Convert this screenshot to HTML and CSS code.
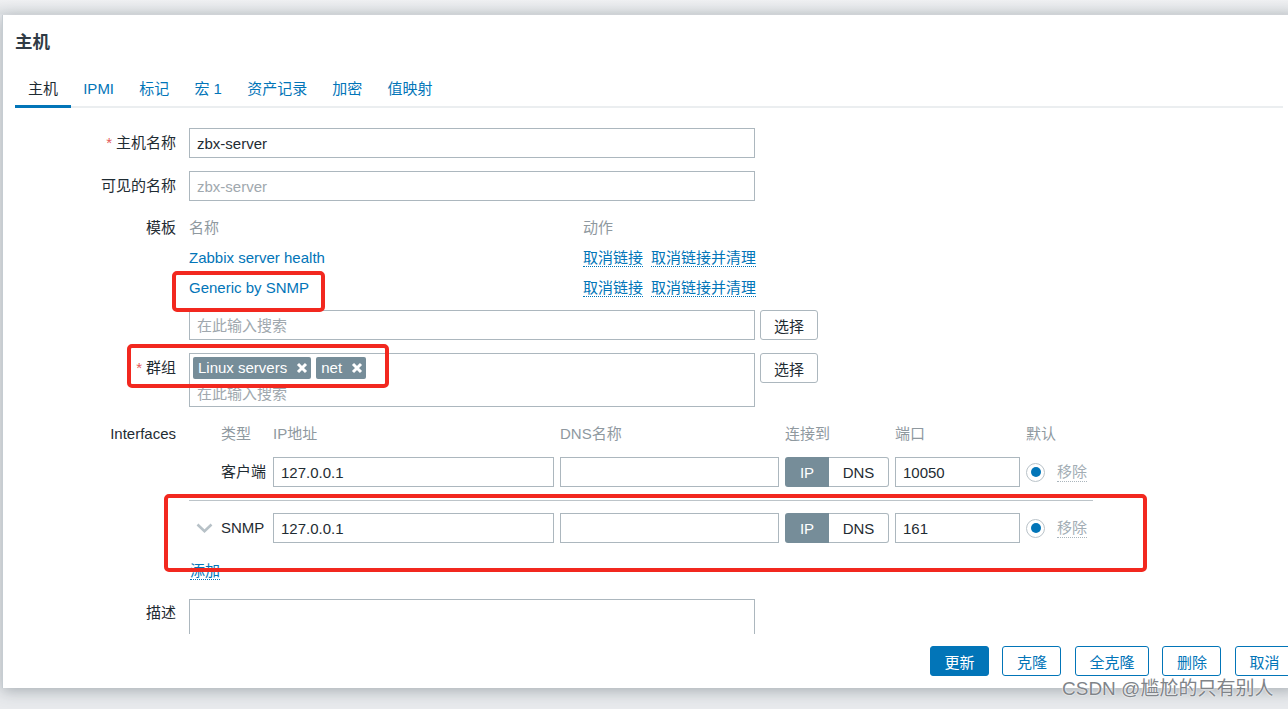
FILE: index.html
```html
<!DOCTYPE html>
<html lang="zh-CN">
<head>
<meta charset="utf-8">
<title>主机</title>
<link rel="stylesheet" href="styles.css">
</head>
<body>
<div class="dialog">
  <div class="dialog-head"><h4 class="dialog-title">主机</h4></div>
  <ul class="tabs">
    <li class="tab active">主机</li>
    <li class="tab">IPMI</li>
    <li class="tab">标记</li>
    <li class="tab">宏 1</li>
    <li class="tab">资产记录</li>
    <li class="tab">加密</li>
    <li class="tab">值映射</li>
  </ul>
  <div class="dialog-body">
    <form class="form-grid">
      <label class="lbl"><span class="req">*</span>主机名称</label>
      <div><input class="text-input" type="text" value="zbx-server"></div>

      <label class="lbl">可见的名称</label>
      <div><input class="text-input" type="text" placeholder="zbx-server"></div>

      <label class="lbl lbl-hdr">模板</label>
      <div>
        <div class="tpl-table">
          <div class="th">名称</div>
          <div class="th">动作</div>
          <div class="td"><a class="link">Zabbix server health</a></div>
          <div class="td actions"><a class="link dotted">取消链接</a><a class="link dotted">取消链接并清理</a></div>
          <div class="td"><a class="link">Generic by SNMP</a></div>
          <div class="td actions"><a class="link dotted">取消链接</a><a class="link dotted">取消链接并清理</a></div>
        </div>
        <div class="pick-row search-row">
          <input class="text-input" type="text" placeholder="在此输入搜索">
          <button type="button" class="btn-alt">选择</button>
        </div>
      </div>

      <label class="lbl"><span class="req">*</span>群组</label>
      <div class="pick-row">
        <div class="ms">
          <div class="ms-tags">
            <span class="tag">Linux servers<svg class="tag-x" width="12" height="12" viewBox="0 0 12 12"><path d="M2 2L10 10M10 2L2 10" stroke="#fff" stroke-width="3" fill="none"/></svg></span>
            <span class="tag">net<svg class="tag-x" width="12" height="12" viewBox="0 0 12 12"><path d="M2 2L10 10M10 2L2 10" stroke="#fff" stroke-width="3" fill="none"/></svg></span>
          </div>
          <input class="ms-input" type="text" placeholder="在此输入搜索">
        </div>
        <button type="button" class="btn-alt">选择</button>
      </div>

      <label class="lbl lbl-hdr">Interfaces</label>
      <div class="ifaces">
        <div class="if-grid if-head">
          <span></span>
          <span>类型</span>
          <span>IP地址</span>
          <span>DNS名称</span>
          <span>连接到</span>
          <span>端口</span>
          <span>默认</span>
        </div>
        <div class="if-grid if-row if-first">
          <span></span>
          <span class="if-type">客户端</span>
          <input class="text-input" type="text" value="127.0.0.1">
          <input class="text-input" type="text" value="">
          <div class="seg"><span class="seg-on">IP</span><span class="seg-off">DNS</span></div>
          <input class="text-input" type="text" value="10050">
          <div class="if-default"><span class="radio"></span><span class="remove">移除</span></div>
        </div>
        <div class="if-grid if-row if-second">
          <svg class="chev" width="17" height="10" viewBox="0 0 17 10"><path d="M1.5 1.5L8.5 8.2L15.5 1.5" stroke="#b7c1c7" stroke-width="2.6" fill="none"/></svg>
          <span class="if-type">SNMP</span>
          <input class="text-input" type="text" value="127.0.0.1">
          <input class="text-input" type="text" value="">
          <div class="seg"><span class="seg-on">IP</span><span class="seg-off">DNS</span></div>
          <input class="text-input" type="text" value="161">
          <div class="if-default"><span class="radio"></span><span class="remove">移除</span></div>
        </div>
        <div class="add-row"><a class="link dotted">添加</a></div>
      </div>

      <label class="lbl lbl-hdr">描述</label>
      <div><textarea class="textarea"></textarea></div>
    </form>
  </div>
  <div class="dialog-foot">
    <button type="button" class="btn primary">更新</button>
    <button type="button" class="btn">克隆</button>
    <button type="button" class="btn">全克隆</button>
    <button type="button" class="btn">删除</button>
    <button type="button" class="btn">取消</button>
  </div>
</div>

<div class="mark mark-tpl"></div>
<div class="mark mark-grp"></div>
<div class="mark mark-snmp"></div>
<div class="watermark">CSDN @尴尬的只有别人</div>
</body>
</html>
```
FILE: styles.css
```css
* {
  box-sizing: border-box;
  margin: 0;
  padding: 0;
}

html {
  background: #e8eaed;
}

body {
  position: relative;
  width: 1288px;
  height: 709px;
  overflow: hidden;
  padding: 15px 0 0 2px;
  background: linear-gradient(#eff0f2 0, #dfe2e5 14px, #e8eaed 15px);
  font-family: "Liberation Sans", "Noto Sans CJK SC", sans-serif;
  font-size: 15px;
  color: #1f2c33;
}

.dialog {
  display: flex;
  flex-direction: column;
  width: 1294px;
  height: 673px;
  background: #fff;
  border-left: 1px solid #c6cdd2;
  box-shadow: 0 3px 14px rgba(50, 62, 72, 0.35);
}

.dialog-head {
  padding: 17px 12px 20px;
}

.dialog-title {
  font-size: 17.5px;
  line-height: 20px;
  font-weight: bold;
  color: #2f3b45;
}

.tabs {
  display: flex;
  list-style: none;
  margin: 0 13px 0 12px;
  border-bottom: 2px solid #ebeef0;
}

.tab {
  padding: 8px 12.6px 7px;
  line-height: 18px;
  border-bottom: 3px solid transparent;
  margin-bottom: -2px;
  color: #0275b8;
}

.tab:first-child {
  padding-left: 13px;
}

.tab.active {
  color: #1f2c33;
  border-bottom-color: #0275b8;
}

.dialog-body {
  height: 526px;
  overflow: hidden;
  padding: 20px 0 0 12px;
}

.form-grid {
  display: grid;
  grid-template-columns: 161px 1fr;
  column-gap: 13px;
  row-gap: 13px;
  align-items: start;
}

.lbl {
  text-align: right;
  line-height: 30px;
  white-space: nowrap;
}

.lbl-hdr {
  line-height: 28px;
}

.req {
  color: #e45959;
  margin-right: 4px;
}

.text-input {
  display: block;
  width: 566px;
  height: 30px;
  border: 1px solid #acb7be;
  padding: 0 7px;
  font: inherit;
  color: #1f2c33;
  background: #fff;
  outline: none;
}

.text-input::placeholder,
.ms-input::placeholder {
  color: #a0a8ae;
}

.link {
  color: #0275b8;
  text-decoration: none;
}

.dotted {
  border-bottom: 1px dotted #0275b8;
}

.tpl-table {
  display: grid;
  grid-template-columns: 394px 172px;
  width: 566px;
}

.th {
  height: 29px;
  line-height: 28px;
  color: #8f999f;
}

.td {
  height: 30px;
  line-height: 30px;
  white-space: nowrap;
}

.actions .link + .link {
  margin-left: 8px;
}

.pick-row {
  display: flex;
  gap: 5px;
  align-items: flex-start;
}

.search-row {
  margin-top: 7px;
}

.btn-alt {
  height: 30px;
  padding: 0 13px;
  border: 1px solid #acb7be;
  border-radius: 3px;
  background: #fff;
  font: inherit;
  color: #1f2c33;
}

.ms {
  width: 566px;
  height: 54px;
  border: 1px solid #acb7be;
  padding: 3px 3px 0;
}

.ms-tags {
  display: flex;
  gap: 5px;
  height: 22px;
}

.tag {
  display: flex;
  align-items: center;
  height: 22px;
  line-height: 22px;
  padding: 0 3px 0 5px;
  background: #768d99;
  color: #fff;
  border-radius: 2px;
  white-space: nowrap;
}

.tag-x {
  margin-left: 9px;
}

.ms-input {
  display: block;
  width: 100%;
  height: 26px;
  margin-top: 1px;
  border: 0;
  padding: 0 4px;
  font: inherit;
  outline: none;
  background: transparent;
}

.ifaces {
  width: 904px;
  padding-bottom: 6px;
}

.if-grid {
  display: grid;
  grid-template-columns: 26px 46px 281px 219px 104px 125px 67px;
  column-gap: 6px;
  align-items: center;
}

.if-head {
  line-height: 28px;
  color: #8f999f;
}

.if-row .text-input {
  width: 100%;
}

.if-first {
  margin-top: 9px;
  padding-bottom: 13px;
}

.if-second {
  border-top: 1px solid #bcc4c9;
  padding-top: 12px;
}

.if-type {
  line-height: 30px;
  white-space: nowrap;
}

.chev {
  margin-left: 7px;
}

.seg {
  display: flex;
  height: 30px;
}

.seg span {
  display: flex;
  align-items: center;
  justify-content: center;
}

.seg-on {
  width: 44px;
  background: #768d99;
  color: #fff;
  border-radius: 3px 0 0 3px;
}

.seg-off {
  width: 60px;
  border: 1px solid #acb7be;
  border-left: 0;
  border-radius: 0 3px 3px 0;
  color: #1f2c33;
}

.if-default {
  display: flex;
  align-items: center;
  gap: 12px;
}

.radio {
  display: flex;
  align-items: center;
  justify-content: center;
  width: 19px;
  height: 19px;
  border: 1px solid #bac3c9;
  border-radius: 50%;
  flex: none;
}

.radio::after {
  content: "";
  width: 10px;
  height: 10px;
  border-radius: 50%;
  background: #0275b8;
}

.remove {
  color: #a2adb4;
  border-bottom: 1px dotted #aab5bc;
  line-height: 18px;
  white-space: nowrap;
}

.add-row {
  margin-top: 19px;
  padding-left: 1px;
  line-height: 18px;
}

.textarea {
  display: block;
  width: 566px;
  height: 120px;
  border: 1px solid #acb7be;
  resize: none;
  font: inherit;
  outline: none;
}

.dialog-foot {
  display: flex;
  justify-content: flex-end;
  gap: 13.5px;
  padding: 12px 2px 0 0;
}

.btn {
  height: 30px;
  padding: 0 13.5px;
  border: 1px solid #0275b8;
  border-radius: 3px;
  background: #fff;
  color: #0275b8;
  font: inherit;
  white-space: nowrap;
}

.btn.primary {
  background: #0275b8;
  color: #fff;
}

.mark {
  position: absolute;
  border: 4px solid #f2281f;
  border-radius: 5px;
  pointer-events: none;
}

.mark-tpl {
  left: 172px;
  top: 271px;
  width: 153px;
  height: 41px;
}

.mark-grp {
  left: 127px;
  top: 344px;
  width: 262px;
  height: 44px;
}

.mark-snmp {
  left: 164px;
  top: 494px;
  width: 983px;
  height: 78px;
}

.watermark {
  position: absolute;
  left: 1062px;
  top: 677px;
  font-size: 19px;
  line-height: 24px;
  color: #808489;
  text-shadow: 0 0 2px #fff, 0 0 1px #fff;
  white-space: nowrap;
}
```
